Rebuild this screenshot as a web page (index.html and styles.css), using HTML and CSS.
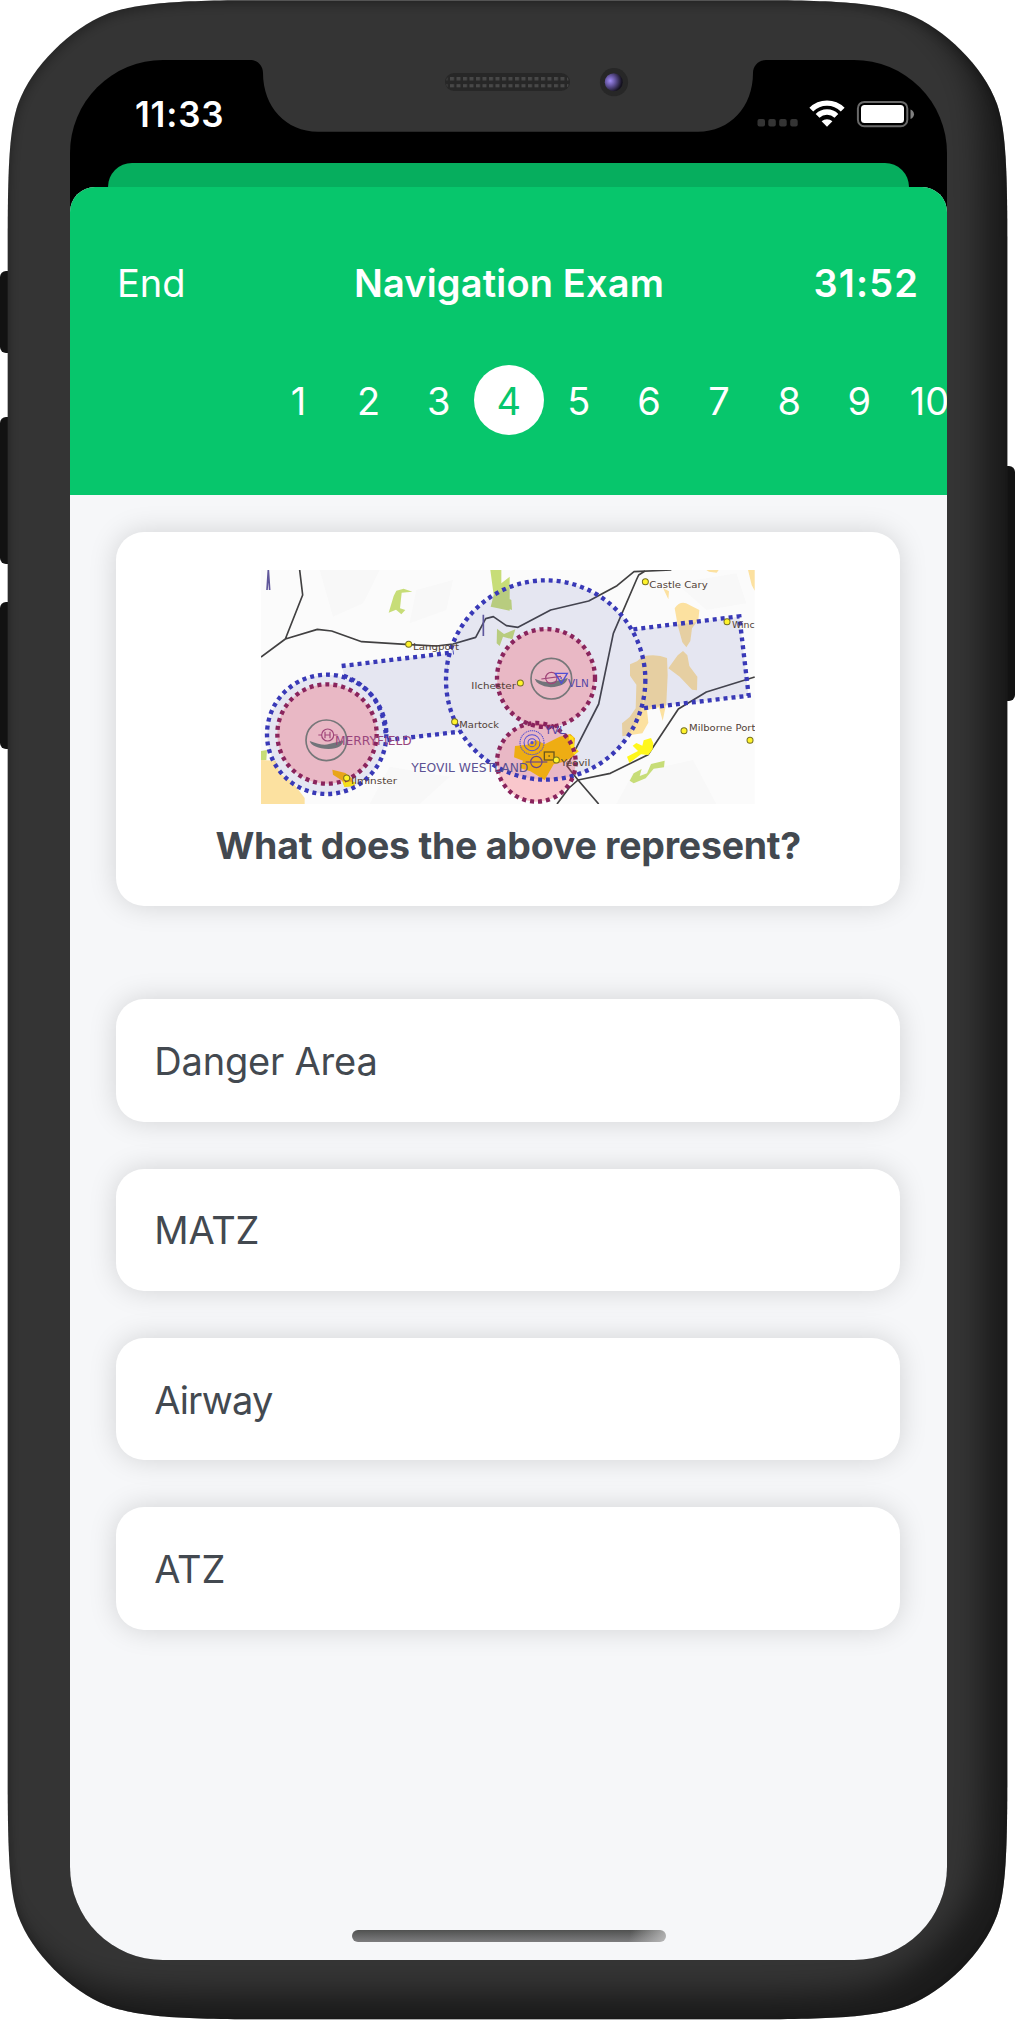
FILE: index.html
```html
<!DOCTYPE html>
<html lang="en">
<head>
<meta charset="utf-8">
<title>Navigation Exam</title>
<link rel="stylesheet" href="styles.css">
</head>
<body>
<div class="device">
  <svg class="frame" viewBox="0 0 1015 2020" width="1015" height="2020" aria-hidden="true">
    <defs>
      <path id="shell" d="M7.7 240C7.7 160 10 128 18 104C32 66 70 29 107 14C132 5 165 .3 250 .3H765C850 .3 883 5 908 14C945 29 983 66 997 104C1005 128 1007.3 160 1007.3 240V1780C1007.3 1860 1005 1892 997 1915.6C983 1953.6 945 1990.6 908 2005.6C883 2014.6 850 2019.3 765 2019.3H250C165 2019.3 132 2014.6 107 2005.6C70 1990.6 32 1953.6 18 1915.6C10 1892 7.7 1860 7.7 1780Z"/>
      <path id="surround" fill-rule="evenodd" d="M-100 -100H1200V2200H-100ZM7.7 240C7.7 160 10 128 18 104C32 66 70 29 107 14C132 5 165 .3 250 .3H765C850 .3 883 5 908 14C945 29 983 66 997 104C1005 128 1007.3 160 1007.3 240V1780C1007.3 1860 1005 1892 997 1915.6C983 1953.6 945 1990.6 908 2005.6C883 2014.6 850 2019.3 765 2019.3H250C165 2019.3 132 2014.6 107 2005.6C70 1990.6 32 1953.6 18 1915.6C10 1892 7.7 1860 7.7 1780Z"/>
      <clipPath id="shellClip"><use href="#shell"/></clipPath>
      <filter id="soft" x="-10%" y="-10%" width="120%" height="120%"><feGaussianBlur stdDeviation="15"/></filter>
      <filter id="edge" x="-10%" y="-10%" width="120%" height="120%"><feGaussianBlur stdDeviation="6"/></filter>
    </defs>
    <g fill="#121212">
      <rect x="0" y="271" width="20" height="82" rx="6"/>
      <rect x="0" y="417" width="20" height="147" rx="6"/>
      <rect x="0" y="602" width="20" height="147" rx="6"/>
      <rect x="995" y="466" width="20" height="235" rx="6"/>
    </g>
    <use href="#shell" fill="#343434"/>
    <g clip-path="url(#shellClip)">
      <use href="#surround" class="shade-br" filter="url(#soft)" transform="translate(-25 -25)"/>
      <use href="#surround" class="shade-tl" filter="url(#edge)" transform="translate(1 4)"/>
    </g>
  </svg>

  <main class="screen">
    <div class="status">
      <span class="clock">11:33</span>
      <svg class="status-icons" viewBox="755 95 165 40" width="165" height="40" aria-label="Wi-Fi and battery">
        <g fill="#343434">
          <rect x="757.5" y="119" width="7.5" height="7.5" rx="2"/><rect x="768.3" y="119" width="7.5" height="7.5" rx="2"/><rect x="779.2" y="119" width="7.5" height="7.5" rx="2"/><rect x="790.2" y="119" width="7.5" height="7.5" rx="2"/>
        </g>
        <g fill="none" stroke="#fff" stroke-width="5.4">
          <path d="M811.3 109.6A22.3 22.3 0 0 1 842.7 109.6"/>
          <path d="M817.6 115.9A13.4 13.4 0 0 1 836.4 115.9"/>
        </g>
        <path d="M827 126.8L821.6 121.3A7.8 7.8 0 0 1 832.4 121.3Z" fill="#fff"/>
        <rect x="857.9" y="101.9" width="49.4" height="24.4" rx="6.5" fill="none" stroke="#696969" stroke-width="2"/>
        <rect x="861" y="105" width="43" height="18" rx="3.5" fill="#fff"/>
        <path d="M910.5 109.5Q914 111 914 114.2T910.5 119Z" fill="#808080"/>
      </svg>
    </div>
    <div class="sheet-behind"></div>
    <section class="sheet">
      <header class="exam-header">
        <div class="bar">
          <span class="end">End</span>
          <h1 class="title">Navigation Exam</h1>
          <span class="timer">31:52</span>
        </div>
        <nav class="pager">
          <span>1</span><span>2</span><span>3</span><span class="current">4</span><span>5</span><span>6</span><span>7</span><span>8</span><span>9</span><span>10</span>
        </nav>
      </header>
      <div class="content">
        <article class="card question">
          <svg class="map" viewBox="34 30 1481 702" preserveAspectRatio="none" role="img" aria-label="Aeronautical chart">
            <rect x="34" y="30" width="1481" height="702" fill="#fbfbfb"/>
            <g fill="#f8f8f8">
              <path d="M210 30L390 30L340 130L250 170ZM500 90L610 60L590 150L480 190ZM420 620L600 650L510 732H360ZM1150 640L1330 600L1400 732H1100ZM1280 70L1460 40L1490 130L1370 150Z"/>
            </g>
            <g fill="#c7dd78">
              <path d="M722 30H755V70L780 50V152L745 145L723 140L732 105ZM750 100L785 120L787 150L752 138ZM417 158L432 108L440 92L462 86L488 95L456 98L451 145L467 150L455 163L439 149ZM742 206L763 222L797 208L788 238L760 230L750 258L741 250ZM34 573L52 570L50 600L34 602ZM1140 662L1152 640L1176 627L1170 648L1192 640L1204 612L1245 602L1243 622L1212 626L1188 655L1152 670Z"/>
            </g>
            <path d="M34 600L78 602L90 640L130 668L165 714V732H34Z" fill="#fce1a0"/>
            <g fill="#fce1a0">
              <path d="M1275 145Q1293 119 1318 134L1349 150L1346 180L1327 205L1322 243L1310 262L1298 247L1284 196ZM1240 84L1258 94L1256 118ZM1370 30H1407L1401 38L1378 35ZM1495 30H1515V92L1506 75ZM1141 313L1162 304L1180 289Q1220 280 1252 294L1254 345L1250 430L1239 482L1228 442L1192 450L1196 488L1178 520L1118 529L1117 490L1140 471L1158 445L1160 374L1141 347ZM1256 325L1284 286L1300 273L1313 286L1319 318L1343 350L1342 391L1327 389L1290 350Z"/>
            </g>
            <g fill="none" stroke="#414041" stroke-width="5" stroke-linejoin="round">
              <path d="M150 30L159 105L107 237L34 291M107 237L203 208L246 213L336 245L480 254L560 258L610 252L678 232L708 176L731 170L770 197L805 202L903 150L1017 123L1102 77L1153 35L1265 30"/>
              <path d="M1186 33L1167 45L1160 60L1091 220L1047 432L952 618L985 660L1047 732M922 732L958 684L985 660L1082 640L1195 584L1286 447L1370 396L1515 351"/>
            </g>
            <g fill="none" stroke="#60579a" stroke-width="5"><path d="M52 90L56 30L60 90M701 164V228"/></g>
            <g fill="#575fb1" fill-opacity=".13">
              <circle cx="231" cy="523" r="178"/>
              <path d="M276 318L602 278Q574 397 631 515L413 542Q402 400 284 347Z"/>
              <circle cx="888" cy="360" r="299"/>
              <path d="M1151 210L1469 170L1497 407L1178 445Q1207 334 1151 210Z"/>
            </g>
            <g fill="#f34a59" fill-opacity=".29">
              <circle cx="232" cy="522" r="149"/><circle cx="889" cy="354" r="147"/><circle cx="860" cy="607" r="118"/>
            </g>
            <path d="M796 558L832 554L860 540L885 553L930 530L962 522L976 535L973 565L987 574L966 592L948 604L912 613L885 660L842 634L811 624L820 602L793 592Z" fill="#eead13"/>
            <path d="M956 524L971 531L974 561L987 574L973 584L962 558Z" fill="#ffe017"/>
            <path d="M248 629L287 639L306 655L316 677L285 680L278 662L250 644Z" fill="#e8a51a"/>
            <path d="M278 664L319 666L310 678L284 681Z" fill="#f4df19"/>
            <path d="M1132 590L1165 573L1149 557L1160 549L1178 557L1182 541L1204 534L1211 550L1209 568L1196 585L1174 583L1139 609Z" fill="#fff71c"/>
            <g class="airspace">
              <circle cx="231" cy="523" r="179"/>
              <circle cx="888" cy="360" r="299"/>
              <path d="M276 318L612 277M413 540L631 515M282 347Q395 389 408 520M1151 208L1469 169L1497 407L1178 445"/>
            </g>
            <g class="zone">
              <circle cx="232" cy="522" r="149"/><circle cx="889" cy="354" r="147"/><circle cx="860" cy="607" r="118"/>
            </g>
            <g fill="none" stroke="#767779" stroke-width="5">
              <circle cx="230" cy="541" r="61"/><circle cx="905" cy="356" r="61"/>
            </g>
            <g fill="#72747a">
              <path d="M180 543Q220 559 238 552Q260 548 281 541Q280 565 237 567Q187 564 180 543ZM855 356Q885 369 908 366L954 354Q949 379 903 382Q861 377 855 356Z"/>
            </g>
            <g fill="none" stroke="#a04478" stroke-width="3.5">
              <circle cx="234" cy="525" r="18"/><path d="M206 525H216M252 525H264M226 515V535M241 515V535M226 525H241"/>
              <circle cx="905" cy="354" r="17"/><path d="M875 357L934 349"/>
            </g>
            <g fill="none" stroke="#514fd3" stroke-width="4">
              <path d="M917 340H953L935 370ZM932 354H937"/>
              <g stroke-width="3"><circle cx="847" cy="548" r="12"/><circle cx="847" cy="548" r="24"/><circle cx="847" cy="548" r="36" stroke-dasharray="4 2"/></g>
              <circle cx="847" cy="548" r="3" fill="#514fd3"/>
            </g>
            <g fill="none" stroke="#69468b" stroke-width="3.5"><circle cx="860" cy="606" r="17"/><path d="M828 606H893"/></g>
            <g fill="none" stroke="#6b571d" stroke-width="4"><rect x="884" y="576" width="29" height="24"/><path d="M896 588H901"/></g>
            <g fill="#fff32b" stroke="#777121" stroke-width="3">
              <circle cx="477" cy="253" r="9"/><circle cx="615" cy="485" r="9"/><circle cx="291" cy="654" r="9"/><circle cx="812" cy="369" r="9"/><circle cx="920" cy="600" r="9"/><circle cx="1187" cy="65" r="9"/><circle cx="1432" cy="185" r="9"/><circle cx="1303" cy="512" r="9"/><circle cx="1501" cy="541" r="9"/>
            </g>
            <g class="place">
              <text x="490" y="271" textLength="138" lengthAdjust="spacingAndGlyphs">Langport</text>
              <text x="629" y="503" textLength="119" lengthAdjust="spacingAndGlyphs">Martock</text>
              <text x="304" y="672" textLength="138" lengthAdjust="spacingAndGlyphs">Ilminster</text>
              <text x="665" y="388" textLength="134" lengthAdjust="spacingAndGlyphs">Ilchester</text>
              <text x="1199" y="83" textLength="175" lengthAdjust="spacingAndGlyphs">Castle Cary</text>
              <text x="1447" y="205">Winc</text>
              <text x="1318" y="514" textLength="199" lengthAdjust="spacingAndGlyphs">Milborne Port</text>
              <text x="933" y="619" textLength="89" lengthAdjust="spacingAndGlyphs">Yeovil</text>
            </g>
            <g class="field">
              <text x="256" y="555" textLength="230" lengthAdjust="spacingAndGlyphs" fill="#99467d">MERRYFIELD</text>
              <text x="485" y="636" textLength="351" lengthAdjust="spacingAndGlyphs" fill="#5c5193">YEOVIL WESTLAND</text>
              <text x="955" y="382" textLength="62" lengthAdjust="spacingAndGlyphs" fill="#5547a5" class="code">VLN</text>
              <text x="886" y="522" textLength="60" lengthAdjust="spacingAndGlyphs" fill="#5547a5" class="code">YVL</text>
            </g>
          </svg>
          <h2 class="prompt">What does the above represent?</h2>
        </article>
        <ul class="answers">
          <li class="card answer">Danger Area</li>
          <li class="card answer">MATZ</li>
          <li class="card answer tight">Airway</li>
          <li class="card answer">ATZ</li>
        </ul>
      </div>
      <div class="home-indicator"></div>
    </section>
  </main>

  <svg class="notch" viewBox="245 58 526 76" width="526" height="76" aria-hidden="true">
    <defs>
      <radialGradient id="lens" cx=".3" cy=".42" r=".65"><stop offset="0" stop-color="#a18cf5"/><stop offset=".45" stop-color="#62539b"/><stop offset="1" stop-color="#15121f"/></radialGradient>
      <pattern id="mesh" x="450" y="77" width="6.5" height="7.2" patternUnits="userSpaceOnUse"><rect width="4" height="3.4" fill="#484848"/></pattern>
    </defs>
    <path d="M250 58V60C258 60 263 66 263 73C263 107 286 131.7 318 131.7H698C730 131.7 753 107 753 73C753 66 758 60 766 60V58Z" fill="#343434"/>
    <rect x="445" y="73" width="125" height="18" rx="9" fill="#272727"/>
    <rect x="446.5" y="77" width="122" height="10.6" rx="3" fill="url(#mesh)"/>
    <circle cx="614" cy="82.2" r="14.1" fill="#272727"/>
    <circle cx="613.8" cy="82.2" r="9" fill="url(#lens)"/>
  </svg>
</div>
</body>
</html>
```
FILE: styles.css
```css
* { box-sizing: border-box; margin: 0; padding: 0; }

body {
  width: 1015px;
  height: 2020px;
  overflow: hidden;
  background: #fff;
  color: #434950;
  font-family: Inter, "Liberation Sans", sans-serif;
  font-size: 38px;
}

.device {
  position: relative;
  width: 1015px;
  height: 2020px;
  padding: 60px 68px 60px 69.5px;
}

.frame { position: absolute; inset: 0; }
.shade-br { fill: rgba(0, 0, 0, .5); }
.shade-tl { fill: rgba(0, 0, 0, .3); }
.notch { position: absolute; left: 245px; top: 58px; }

.screen {
  position: relative;
  display: flex;
  flex-direction: column;
  height: 1900.3px;
  overflow: hidden;
  border-radius: 93px;
  background: #000;
}

.status {
  display: flex;
  justify-content: space-between;
  flex: 0 0 103px;
  padding: 35px 27.5px 0 65.5px;
}

.clock {
  margin-top: -1px;
  color: #fff;
  font-size: 35px;
  font-weight: 600;
  letter-spacing: .8px;
  line-height: 40px;
}

.sheet-behind {
  flex: 0 0 48px;
  margin: 0 38px;
  border-radius: 24px 24px 0 0;
  background: #06ae5e;
}

.sheet {
  position: relative;
  display: flex;
  flex: 1;
  flex-direction: column;
  margin-top: -24.5px;
  overflow: hidden;
  border-radius: 25px 25px 0 0;
  background: #f6f7f9;
}

.exam-header {
  flex: 0 0 308.8px;
  padding-top: 72px;
  overflow: hidden;
  background: #07c66c;
  color: #fff;
}

.bar {
  display: grid;
  grid-template-columns: 1fr auto 1fr;
  align-items: center;
  height: 48px;
  padding: 0 28px 0 47.5px;
  line-height: 48px;
}

.end { font-weight: 400; }
.title { margin-left: -18px; font-size: 38px; font-weight: 600; letter-spacing: .15px; }
.timer { justify-self: end; font-weight: 600; letter-spacing: 1.1px; }

.pager {
  display: flex;
  margin-top: 58px;
  padding-left: 194px;
  line-height: 72px;
}

.pager span { flex: 0 0 70.1px; height: 70px; text-align: center; }
.pager .current { border-radius: 50%; background: #fff; color: #07c66c; }

.content {
  display: flex;
  flex-direction: column;
  gap: 93.5px;
  padding: 37.2px 46.8px 0 46.8px;
}

.card {
  border-radius: 28px;
  background: #fff;
  box-shadow: 0 0 28px rgba(0, 0, 0, .15);
}

.question {
  display: flex;
  flex-direction: column;
  align-items: center;
  height: 373.3px;
  padding-top: 37.5px;
}

.map { display: block; width: 493.7px; height: 234px; }
.airspace { fill: none; stroke: #3939b7; stroke-width: 13; stroke-dasharray: 12 12; }
.zone { fill: none; stroke: #8a245d; stroke-width: 13; stroke-dasharray: 12 12; }

.place { fill: #514136; font: 28px "DejaVu Sans", sans-serif; }
.field { font: 36px "DejaVu Sans", sans-serif; }
.code { font-size: 30px; }

.prompt {
  margin-top: 18px;
  font-size: 37.5px;
  font-weight: 700;
  letter-spacing: -.25px;
  line-height: 48px;
  white-space: nowrap;
}

.answers {
  display: flex;
  flex-direction: column;
  gap: 46.7px;
  list-style: none;
}

.answer {
  display: flex;
  align-items: center;
  height: 122.6px;
  padding: 1px 0 0 38px;
  letter-spacing: -.2px;
}

.tight { letter-spacing: -.9px; }

.home-indicator {
  width: 314px;
  height: 11.5px;
  margin: auto auto 18.8px 282.5px;
  border-radius: 6px;
  background: linear-gradient(105deg, transparent 88%, rgba(200, 200, 200, .8)), linear-gradient(#505150, #7d7d7f);
}
```
